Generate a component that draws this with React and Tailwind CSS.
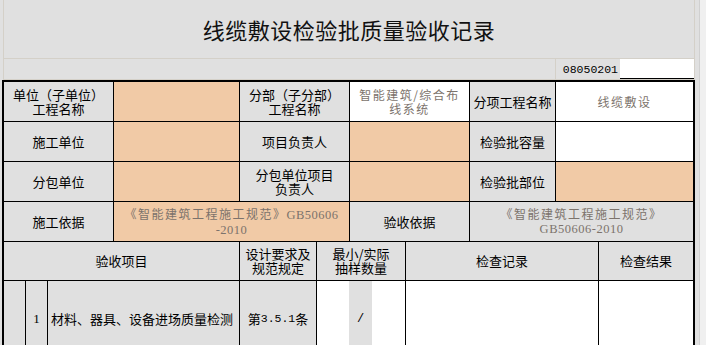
export default function App() {
  const label = "shrink-0 border-r border-black bg-[#e0e0e0] flex flex-col items-center justify-center text-center leading-[14px]"
  const orange = "shrink-0 border-r border-black bg-[#f1caa6]"
  const muted = "text-[12px] tracking-[1.5px] text-[#7c736c] leading-[14px]"
  const serif = "font-['Liberation_Serif',serif] text-[12.5px] tracking-[0.5px]"

  return (
    <div className="w-[706px] h-[345px] overflow-hidden flex bg-[#f0f0f0] font-['Noto_Sans_CJK_SC',sans-serif] text-[13px] text-black">
      <div className="w-[699px] shrink-0 bg-[#e0e0e0] flex flex-col">
        {/* window top edge */}
        <div className="h-[3px] w-full bg-[#2b2b2b]" />

        {/* sheet header */}
        <div className="ml-[3px] w-[692px] border-l border-r border-[#d4d0c8]">
          <div className="h-[59px] border-b border-[#d4d0c8] flex items-center justify-center text-[22px] tracking-[0.5px] text-[#111]">
            线缆敷设检验批质量验收记录
          </div>
          <div className="h-[21px] border-b border-[#d4d0c8] flex">
            <div className="w-[552px] border-r border-[#d4d0c8]" />
            <div className="w-[64px] flex items-center justify-end pr-[2px] pt-[2px] font-['Liberation_Mono',monospace] text-[11.5px]">
              08050201
            </div>
            <div className="w-[74px] h-[20px] bg-white border-b border-black" />
          </div>
        </div>

        <div className="h-[2px]" />

        {/* acceptance table */}
        <div className="ml-[2px] w-[693px] border-2 border-black flex flex-col">
          {/* row 1 */}
          <div className="flex h-[40px] border-b border-black">
            <div className={`w-[110px] ${label}`}>
              <div>单位（子单位）</div>
              <div>工程名称</div>
            </div>
            <div className={`w-[126px] ${orange}`} />
            <div className={`w-[110px] ${label}`}>
              <div>分部（子分部）</div>
              <div>工程名称</div>
            </div>
            <div className="w-[120px] shrink-0 border-r border-black bg-white flex flex-col items-center justify-center text-center">
              <div className={muted}>智能建筑/综合布</div>
              <div className={muted}>线系统</div>
            </div>
            <div className={`w-[86px] ${label}`}>分项工程名称</div>
            <div className="flex-1 bg-white flex items-center justify-center">
              <span className={muted}>线缆敷设</span>
            </div>
          </div>

          {/* row 2 */}
          <div className="flex h-[40px] border-b border-black">
            <div className={`w-[110px] ${label}`}>施工单位</div>
            <div className={`w-[126px] ${orange}`} />
            <div className={`w-[110px] ${label}`}>项目负责人</div>
            <div className={`w-[120px] ${orange}`} />
            <div className={`w-[86px] ${label}`}>检验批容量</div>
            <div className="flex-1 bg-white" />
          </div>

          {/* row 3 */}
          <div className="flex h-[40px] border-b border-black">
            <div className={`w-[110px] ${label}`}>分包单位</div>
            <div className={`w-[126px] ${orange}`} />
            <div className={`w-[110px] ${label}`}>
              <div>分包单位项目</div>
              <div>负责人</div>
            </div>
            <div className={`w-[120px] ${orange}`} />
            <div className={`w-[86px] ${label}`}>检验批部位</div>
            <div className="flex-1 bg-[#f1caa6]" />
          </div>

          {/* row 4 */}
          <div className="flex h-[40px] border-b border-black">
            <div className={`w-[110px] ${label}`}>施工依据</div>
            <div className="w-[236px] shrink-0 border-r border-black bg-[#f1caa6] flex flex-col items-center justify-center text-center">
              <div className={muted}>
                《智能建筑工程施工规范》<span className={serif}>GB50606</span>
              </div>
              <div className={muted}>
                <span className={serif}>-2010</span>
              </div>
            </div>
            <div className={`w-[120px] ${label}`}>验收依据</div>
            <div className="flex-1 bg-[#e0e0e0] flex flex-col items-center justify-center text-center">
              <div className={muted}>《智能建筑工程施工规范》</div>
              <div className={muted}>
                <span className={serif}>GB50606-2010</span>
              </div>
            </div>
          </div>

          {/* row 5: headings */}
          <div className="flex h-[39px] border-b border-black">
            <div className={`w-[236px] ${label}`}>验收项目</div>
            <div className={`w-[77px] ${label}`}>
              <div>设计要求及</div>
              <div>规范规定</div>
            </div>
            <div className={`w-[89px] ${label}`}>
              <div>最小/实际</div>
              <div>抽样数量</div>
            </div>
            <div className={`w-[193px] ${label}`}>检查记录</div>
            <div className="flex-1 bg-[#e0e0e0] flex items-center justify-center">检查结果</div>
          </div>

          {/* row 6 */}
          <div className="flex h-[80px]">
            <div className="w-[22px] shrink-0 border-r border-black bg-[#e0e0e0]" />
            <div className="w-[22px] shrink-0 border-r border-black bg-[#e0e0e0] flex items-center justify-center font-['Liberation_Serif',serif] text-[13px] pb-[5px]">1</div>
            <div className="w-[192px] shrink-0 border-r border-black bg-[#e0e0e0] flex items-center pl-[3px] pb-[5px] whitespace-nowrap">
              材料、器具、设备进场质量检测
            </div>
            <div className="w-[77px] shrink-0 border-r border-black bg-[#e0e0e0] flex items-center justify-center pb-[5px]">
              第<span className="font-['Liberation_Mono',monospace] text-[11.5px]">3.5.1</span>条
            </div>
            <div className="w-[89px] shrink-0 border-r border-black flex">
              <div className="w-[32px] bg-white" />
              <div className="w-[23px] bg-[#e0e0e0] flex items-center justify-center pb-[5px] font-['Liberation_Mono',monospace] text-[12px]">/</div>
              <div className="flex-1 bg-white" />
            </div>
            <div className="w-[193px] shrink-0 border-r border-black bg-white" />
            <div className="flex-1 bg-white" />
          </div>
        </div>
      </div>

      {/* right edge */}
      <div className="flex-1 border-l border-[#d0d0d0] bg-[#f0f0f0]" />
    </div>
  )
}
